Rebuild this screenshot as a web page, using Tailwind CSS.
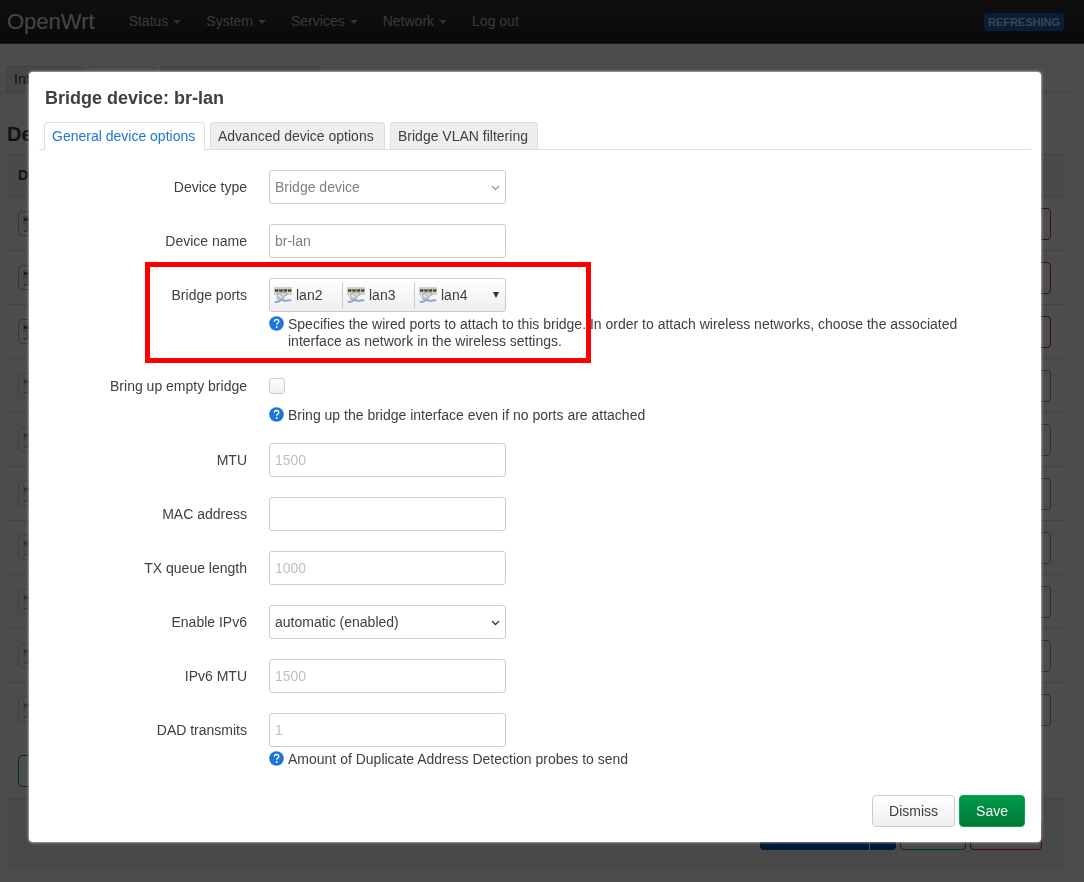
<!DOCTYPE html>
<html lang="en">
<head>
<meta charset="utf-8">
<title>OpenWrt - Devices</title>
<script src="https://cdn.jsdelivr.net/npm/@tailwindcss/browser@4"></script>
</head>
<body class="h-screen overflow-hidden bg-white font-['Liberation_Sans',Arial,sans-serif] text-[14px] leading-[17px] text-[#404040]">

<svg class="hidden" aria-hidden="true">
  <symbol id="port" viewBox="0 0 18 18">
    <rect x="0" y="1" width="18" height="8" fill="#d2d2cc"/>
    <path d="M1 3h3.400v2.800H1zM5.300 3h3.400v2.800H5.300zM9.600 3h3.400v2.800H9.600zM13.900 3h3.400v2.800h-3.400z" fill="#45453a"/>
    <path d="M1.800 3.500h1.300M6.100 3.500h1.300M10.400 3.500h1.300M14.800 3.500h1.300" stroke="#b5a83c" stroke-width="1"/>
    <path d="M3.500 7.500l3-1 6.500.5v2l-2.500 1.200-1 3.300-4.500 1-2-2z" fill="#c3c6c4" stroke="#999e9c" stroke-width=".6"/>
    <path d="M4.500 9l3 2.500M8 8l3 .5" stroke="#eee" stroke-width="1.100"/>
    <path d="M1.500 15.800c2 .6 3.500-.6 5.500-1.600 1.800-.8 2.500.8 4.500.7 2-.1 3-1 5-.7" fill="none" stroke="#84a9da" stroke-width="2" stroke-linecap="round"/>
  </symbol>
  <symbol id="help" viewBox="0 0 15 15">
    <circle cx="7.500" cy="7.500" r="7.300" fill="#1b76d8"/>
    <path d="M5.300 5.600c.1-1.400 1-2.100 2.300-2.100s2.200.8 2.200 1.900c0 1.600-2.100 1.700-2.100 3.400" fill="none" stroke="#fff" stroke-width="1.300"/>
    <circle cx="7.700" cy="11" r=".95" fill="#fff"/>
  </symbol>
  <symbol id="chev" viewBox="0 0 9 6"><path d="M1 1l3.500 3.500L8 1" fill="none" stroke="currentColor" stroke-width="1.300"/></symbol>
</svg>

<header class="flex h-[44px] items-center border-b border-[#555] bg-linear-to-b from-[#333] to-[#222] pr-5 pl-[7px] text-[#bfbfbf]">
  <a href="#" class="text-[22px] leading-[24px] text-[#e8e8e8]">OpenWrt</a>
  <nav class="ml-[34px] flex flex-1 gap-[25px]">
    <a href="#" class="flex items-center gap-[5px]">Status <i class="border-x-4 border-t-4 border-x-transparent border-t-current opacity-80"></i></a>
    <a href="#" class="flex items-center gap-[5px]">System <i class="border-x-4 border-t-4 border-x-transparent border-t-current opacity-80"></i></a>
    <a href="#" class="flex items-center gap-[5px]">Services <i class="border-x-4 border-t-4 border-x-transparent border-t-current opacity-80"></i></a>
    <a href="#" class="flex items-center gap-[5px]">Network <i class="border-x-4 border-t-4 border-x-transparent border-t-current opacity-80"></i></a>
    <a href="#">Log out</a>
  </nav>
  <span class="rounded bg-[#1068b8] px-1 text-[11px] leading-[18px] font-bold text-[#ddd]">REFRESHING</span>
</header>

<main class="pr-5 pl-[7px]">
  <nav class="mt-[22px] -mr-[5px] -ml-[7px] flex gap-[5px] border-b border-[#ddd] pl-[6px]">
    <a href="#" class="w-[78px] rounded-t border border-b-0 border-[#ddd] bg-[#eee] px-[7px] py-1">Interfaces</a>
    <a href="#" class="w-[66px] rounded-t border border-b-0 border-[#ddd] bg-white px-[7px] py-1">Devices</a>
    <a href="#" class="w-[161px] rounded-t border border-b-0 border-[#ddd] bg-[#eee] px-[7px] py-1">Global options</a>
  </nav>
  <h2 class="mt-[29px] text-[20px] leading-[24px] font-bold">Devices</h2>
  <table class="mt-[8px] w-full border-collapse text-left">
    <thead><tr class="h-[42px] border-y border-[#ddd] bg-[#f9f9f9]"><th class="pl-[11px]">Device</th><th></th></tr></thead>
    <tbody id="rows"></tbody>
  </table>
  <button class="mt-[18px] ml-[11px] block h-[32px] rounded border border-[#00a04a] px-4 text-[#00a04a]">Add device configuration…</button>
  <div class="mt-[11px] flex h-[72px] items-start justify-end gap-[4px] border-t border-[#ddd] bg-[#f3f3f3] pt-[19px] pr-[22px]">
    <div class="flex h-[32px] gap-px"><button class="w-[109px] rounded-l bg-[#0059b8] text-white">Save &amp; Apply</button><button class="w-[26px] rounded-r bg-[#0059b8] text-white" aria-label="More">▾</button></div>
    <button class="h-[32px] w-[66px] rounded border border-[#00a04a] text-[#00a04a]">Save</button>
    <button class="h-[32px] w-[72px] rounded border border-[#d03020] text-[#d03020]">Reset</button>
  </div>
</main>

<div class="fixed inset-0 bg-black/70 pt-[72px] pr-[43px] pl-[29px]">
  <section role="dialog" aria-labelledby="title" class="relative rounded bg-white pt-[16px] pr-[10px] pb-[15px] pl-[10px] shadow-[0_0_3px_#fff]">
    <h4 id="title" class="ml-[6px] text-[18px] leading-[20px] font-bold">Bridge device: br-lan</h4>
    <div role="tablist" class="mt-[14px] flex items-end gap-[5px] border-b border-[#ddd] pl-[5px] whitespace-nowrap">
      <a href="#" role="tab" aria-selected="true" class="-mb-px w-[161px] rounded-t border border-b-0 border-[#ddd] bg-white px-[7px] pt-[5px] pb-[5px] text-[#1b76d8]">General device options</a>
      <a href="#" role="tab" class="w-[175px] rounded-t border border-b-0 border-[#ddd] bg-[#eee] px-[7px] pt-[5px] pb-1">Advanced device options</a>
      <a href="#" role="tab" class="w-[148px] rounded-t border border-b-0 border-[#ddd] bg-[#eee] px-[7px] pt-[5px] pb-1">Bridge VLAN filtering</a>
    </div>

    <form class="mt-5 flex flex-col gap-5">
      <div class="flex"><label for="type" class="mr-[22px] w-[208px] text-right leading-[34px]">Device type</label>
        <div class="relative"><select id="type" disabled class="h-[34px] w-[237px] appearance-none rounded-[3px] border border-[#ccc] bg-white px-[5px] text-[#808080] opacity-100"><option>Bridge device</option></select><svg class="absolute top-[15px] right-[6px] h-[6px] w-[9px] text-[#999]"><use href="#chev"/></svg></div></div>
      <div class="flex"><label for="name" class="mr-[22px] w-[208px] text-right leading-[34px]">Device name</label>
        <input id="name" disabled value="br-lan" class="h-[34px] w-[237px] rounded-[3px] border border-[#ccc] px-[5px] text-[#808080]"></div>
      <div class="flex"><label for="ports" class="mr-[22px] w-[208px] text-right leading-[34px]">Bridge ports</label>
        <div class="flex-1">
          <button id="ports" type="button" class="flex h-[34px] w-[237px] items-center rounded-[3px] border border-[#ccc] bg-linear-to-b from-white to-[#eee] py-[3px]">
            <span class="flex h-full w-[73px] items-center gap-[4px] border-r border-[#ccc] pl-[4px]"><svg class="size-[18px]"><use href="#port"/></svg>lan2</span>
            <span class="flex h-full w-[72px] items-center gap-[4px] border-r border-[#ccc] pl-[4px]"><svg class="size-[18px]"><use href="#port"/></svg>lan3</span>
            <span class="flex flex-1 items-center gap-[4px] pl-[4px]"><svg class="size-[18px]"><use href="#port"/></svg>lan4</span>
            <svg class="mr-[6px] h-[6px] w-[6px]" viewBox="0 0 6 6"><path d="M0 0h6L3 6z" fill="#333"/></svg>
          </button>
          <p class="mt-1 -mb-px flex max-w-[702px] gap-1"><svg class="size-[15px] shrink-0"><use href="#help"/></svg><span>Specifies the wired ports to attach to this bridge. In order to attach wireless networks, choose the associated interface as network in the wireless settings.</span></p>
        </div></div>
      <div class="flex"><label for="empty" class="mr-[22px] w-[208px] text-right leading-[34px]">Bring up empty bridge</label>
        <div class="flex-1">
          <div class="flex h-[34px] items-center"><input id="empty" type="checkbox" class="size-[16px] appearance-none rounded-[3px] border border-[#ccc] bg-linear-to-b from-white to-[#f0f0f0]"></div>
          <p class="mt-1 -mb-px flex gap-1"><svg class="size-[15px] shrink-0"><use href="#help"/></svg><span>Bring up the bridge interface even if no ports are attached</span></p>
        </div></div>
      <div class="flex"><label for="mtu" class="mr-[22px] w-[208px] text-right leading-[34px]">MTU</label>
        <input id="mtu" placeholder="1500" class="h-[34px] w-[237px] rounded-[3px] border border-[#ccc] px-[5px] placeholder:text-[#bfbfbf]"></div>
      <div class="flex"><label for="mac" class="mr-[22px] w-[208px] text-right leading-[34px]">MAC address</label>
        <input id="mac" class="h-[34px] w-[237px] rounded-[3px] border border-[#ccc] px-[5px]"></div>
      <div class="flex"><label for="txq" class="mr-[22px] w-[208px] text-right leading-[34px]">TX queue length</label>
        <input id="txq" placeholder="1000" class="h-[34px] w-[237px] rounded-[3px] border border-[#ccc] px-[5px] placeholder:text-[#bfbfbf]"></div>
      <div class="flex"><label for="ipv6" class="mr-[22px] w-[208px] text-right leading-[34px]">Enable IPv6</label>
        <div class="relative"><select id="ipv6" class="h-[34px] w-[237px] appearance-none rounded-[3px] border border-[#ccc] bg-white px-[5px]"><option>automatic (enabled)</option></select><svg class="absolute top-[15px] right-[6px] h-[6px] w-[9px] text-[#333]"><use href="#chev"/></svg></div></div>
      <div class="flex"><label for="mtu6" class="mr-[22px] w-[208px] text-right leading-[34px]">IPv6 MTU</label>
        <input id="mtu6" placeholder="1500" class="h-[34px] w-[237px] rounded-[3px] border border-[#ccc] px-[5px] placeholder:text-[#bfbfbf]"></div>
      <div class="flex"><label for="dad" class="mr-[22px] w-[208px] text-right leading-[34px]">DAD transmits</label>
        <div class="flex-1"><input id="dad" placeholder="1" class="block h-[34px] w-[237px] rounded-[3px] border border-[#ccc] px-[5px] placeholder:text-[#bfbfbf]">
          <p class="mt-1 -mb-px flex gap-1"><svg class="size-[15px] shrink-0"><use href="#help"/></svg><span>Amount of Duplicate Address Detection probes to send</span></p></div></div>
    </form>

    <div class="mt-7 flex justify-end gap-[4px] pr-[6px]">
      <button class="h-[32px] rounded border border-[#ccc] bg-linear-to-b from-white to-[#f0f0f0] px-4">Dismiss</button>
      <button class="h-[32px] rounded border border-[#00a850] bg-linear-to-b from-[#009a4a] to-[#007a38] px-4 text-[#f0f8f0]">Save</button>
    </div>
    <div class="pointer-events-none absolute top-[190px] left-[116px] h-[101px] w-[446px] border-5 border-[#ff0000]"></div>
  </section>
</div>

<script>
  const rows = document.getElementById('rows');
  for (let i = 0; i < 10; i++) {
    const faded = i > 2 ? 'opacity-60' : '';
    rows.insertAdjacentHTML('beforeend', `<tr class="h-[54px] border-b border-[#ddd] last:border-0"><td class="pl-[11px]"><span class="flex h-[25px] w-[60px] items-center rounded border border-[#bbb] pl-[4px] ${faded}"><svg class="size-[18px]"><use href="#port"/></svg></span></td><td class="pr-[13px]"><button class="float-right h-[32px] w-[70px] rounded border border-[#d03020] text-[#d03020] ${faded}">Unset</button></td></tr>`);
  }
</script>
</body>
</html>
